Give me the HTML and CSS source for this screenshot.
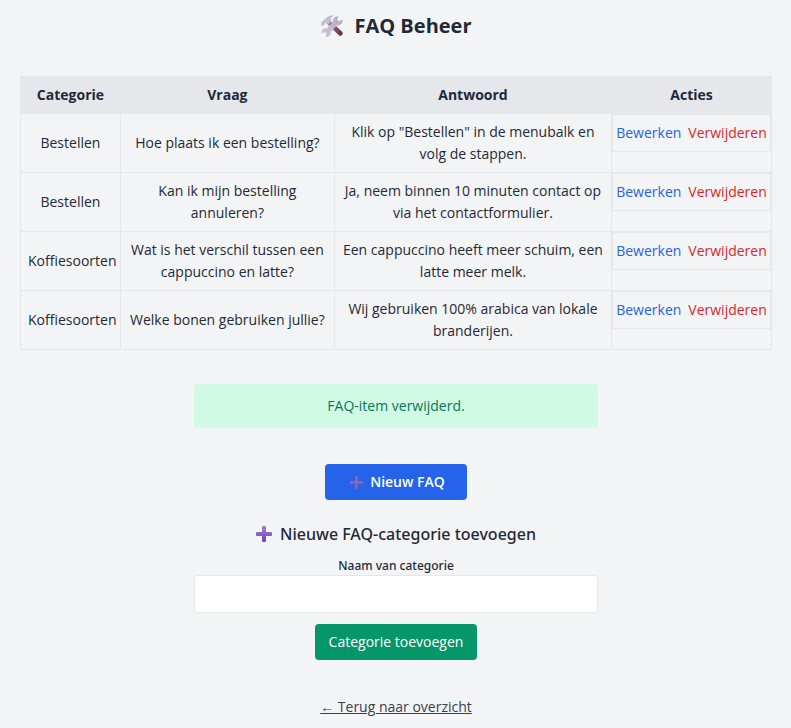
FILE: index.html
```html
<!DOCTYPE html>
<html lang="nl">
<head>
<meta charset="utf-8">
<meta name="viewport" content="width=device-width, initial-scale=1">
<title>FAQ Beheer</title>
<link rel="stylesheet" href="styles.css">
</head>
<body>
<main class="page">
  <h1 class="title">
    <svg class="title-icon" viewBox="0 0 24 24" aria-hidden="true">
      <defs>
        <linearGradient id="handle" x1="0" y1="0" x2="1" y2="1"><stop offset="0" stop-color="#a88a9c"/><stop offset=".5" stop-color="#8a5a66"/><stop offset="1" stop-color="#6b3540"/></linearGradient>
        <linearGradient id="steel" x1="0" y1="1" x2="1" y2="0"><stop offset="0" stop-color="#d3c3de"/><stop offset="1" stop-color="#b3a9bf"/></linearGradient>
      </defs>
      <path d="M9 8.500 20.500 19.500" stroke="url(#handle)" stroke-width="4.500" stroke-linecap="round"/>
      <path d="M1 11 1.500 8 8 2.500 12.500 1 13 2.500 10.500 4 11.500 7 8.500 10 6.500 8 3.500 12Z" fill="#c5bdd0"/>
      <path d="M17.500 2.500c-3 0-5 2.500-4.300 5.300L6.800 14.500C4 13.800 1.500 15.800 1.500 18.500l.2 1 3-1.500 2 1.800-1.200 3 1 .2c2.800 0 4.800-2.500 4.200-5.300l6.500-6.500c3 .6 5.300-1.700 5.300-4.400l-.3-1.300-3 2-2.200-2 1.700-2.800Z" fill="url(#steel)"/>
    </svg>
    FAQ Beheer
  </h1>

  <table class="faq">
    <colgroup><col class="col-category"><col class="col-question"><col class="col-answer"><col class="col-actions"></colgroup>
    <thead>
      <tr><th scope="col">Categorie</th><th scope="col">Vraag</th><th scope="col">Antwoord</th><th scope="col">Acties</th></tr>
    </thead>
    <tbody>
      <tr>
        <td>Bestellen</td><td>Hoe plaats ik een bestelling?</td><td>Klik op "Bestellen" in de menubalk en volg de stappen.</td>
        <td class="actions"><div class="action-box"><a class="edit" href="#">Bewerken</a><button class="delete" type="button">Verwijderen</button></div></td>
      </tr>
      <tr>
        <td>Bestellen</td><td>Kan ik mijn bestelling annuleren?</td><td>Ja, neem binnen 10 minuten contact op via het contactformulier.</td>
        <td class="actions"><div class="action-box"><a class="edit" href="#">Bewerken</a><button class="delete" type="button">Verwijderen</button></div></td>
      </tr>
      <tr>
        <td>Koffiesoorten</td><td>Wat is het verschil tussen een cappuccino en latte?</td><td>Een cappuccino heeft meer schuim, een latte meer melk.</td>
        <td class="actions"><div class="action-box"><a class="edit" href="#">Bewerken</a><button class="delete" type="button">Verwijderen</button></div></td>
      </tr>
      <tr>
        <td>Koffiesoorten</td><td>Welke bonen gebruiken jullie?</td><td>Wij gebruiken 100% arabica van lokale branderijen.</td>
        <td class="actions"><div class="action-box"><a class="edit" href="#">Bewerken</a><button class="delete" type="button">Verwijderen</button></div></td>
      </tr>
    </tbody>
  </table>

  <p class="notice" role="status">FAQ-item verwijderd.</p>

  <a class="button button-primary" href="#">
    <svg class="plus plus-thin" viewBox="0 0 16 16" aria-hidden="true">
      <path d="M8 1v14M1 8h14" stroke="#8b58b5" stroke-width="3"/>
      <path d="M7.500 1v13M1 7.500h14" stroke="#a96d9f" stroke-width="1"/>
    </svg>
    Nieuw FAQ
  </a>

  <form class="category-form">
    <h2 class="subtitle">
      <svg class="plus" viewBox="0 0 16 16" aria-hidden="true">
        <defs><linearGradient id="violet" x1="0" y1="0" x2="0" y2="1"><stop offset="0" stop-color="#9a83c4"/><stop offset="1" stop-color="#7440c0"/></linearGradient></defs>
        <path d="M6 1q0-1 1-1h2q1 0 1 1v5h5q1 0 1 1v2q0 1-1 1h-5v5q0 1-1 1H7q-1 0-1-1v-5H1q-1 0-1-1V7q0-1 1-1h5Z" fill="url(#violet)"/>
      </svg>
      Nieuwe FAQ-categorie toevoegen
    </h2>
    <label class="label" for="category-name">Naam van categorie</label>
    <input class="input" id="category-name" name="name" type="text">
    <button class="button button-success" type="submit">Categorie toevoegen</button>
  </form>

  <a class="back" href="#">← Terug naar overzicht</a>
</main>
</body>
</html>
```
FILE: styles.css
```css
* { box-sizing: border-box; }

body {
  margin: 0;
  background: #f3f4f6;
  color: #1f2937;
  font: 14px/22px "Segoe UI", "Open Sans", sans-serif;
}

.page {
  display: flex;
  flex-direction: column;
  align-items: center;
  padding: 8px 19px 10px 20px;
  text-align: center;
}

.title {
  display: flex;
  align-items: center;
  gap: 10px;
  margin: 0 0 32px;
  font-size: 20px;
  line-height: 36px;
  font-weight: 700;
}

.title-icon { width: 24px; height: 24px; fill: none; }

.faq {
  width: 100%;
  table-layout: fixed;
  border-collapse: collapse;
}

.col-category { width: 13.3%; }
.col-question { width: 28.5%; }
.col-answer { width: 36.9%; }
.col-actions { width: 21.3%; }

.faq th, .faq td {
  padding: 7px;
  border: 1px solid #e5e7eb;
}

.faq th { background: #e5e7eb; font-weight: 700; }

.faq .actions { padding: 0; vertical-align: top; }

.action-box {
  display: flex;
  justify-content: center;
  gap: 7px;
  padding: 7px 0;
  border: 1px solid #e5e7eb;
}

.edit { color: #2563eb; text-decoration: none; }

.delete {
  padding: 0;
  border: 0;
  background: none;
  color: #dc2626;
  font: inherit;
}

.notice {
  width: 100%;
  max-width: 404px;
  margin: 34px 0 36px;
  padding: 11px;
  border-radius: 4px;
  background: #d1fae5;
  color: #047857;
}

.button {
  display: inline-flex;
  align-items: center;
  justify-content: center;
  gap: 6px;
  padding: 7px 14px;
  border: 0;
  border-radius: 4px;
  color: #fff;
  font: inherit;
  text-decoration: none;
}

.button-primary { padding: 7px 22px 7px 24px; background: #2563eb; font-weight: 600; }
.button-success { background: #059669; }

.plus { width: 16px; height: 16px; fill: none; }
.plus-thin { width: 15px; height: 15px; }

.category-form {
  display: flex;
  flex-direction: column;
  align-items: center;
  width: 100%;
  max-width: 404px;
  margin: 22px 0 36px;
}

.subtitle, .label {
  font-family: "Segoe UI", "Noto Sans", sans-serif;
  font-weight: 500;
}

.subtitle {
  display: flex;
  align-items: center;
  gap: 8px;
  margin: 0 0 10px;
  font-size: 16px;
  line-height: 24px;
  white-space: nowrap;
}

.label { font-size: 12px; line-height: 19px; }

.input {
  width: 100%;
  height: 38px;
  margin-bottom: 11px;
  padding: 7px;
  border: 1px solid #e5e7eb;
  border-radius: 4px;
  background: #fff;
  color: inherit;
  font: inherit;
}

.back { color: #374151; }
```
